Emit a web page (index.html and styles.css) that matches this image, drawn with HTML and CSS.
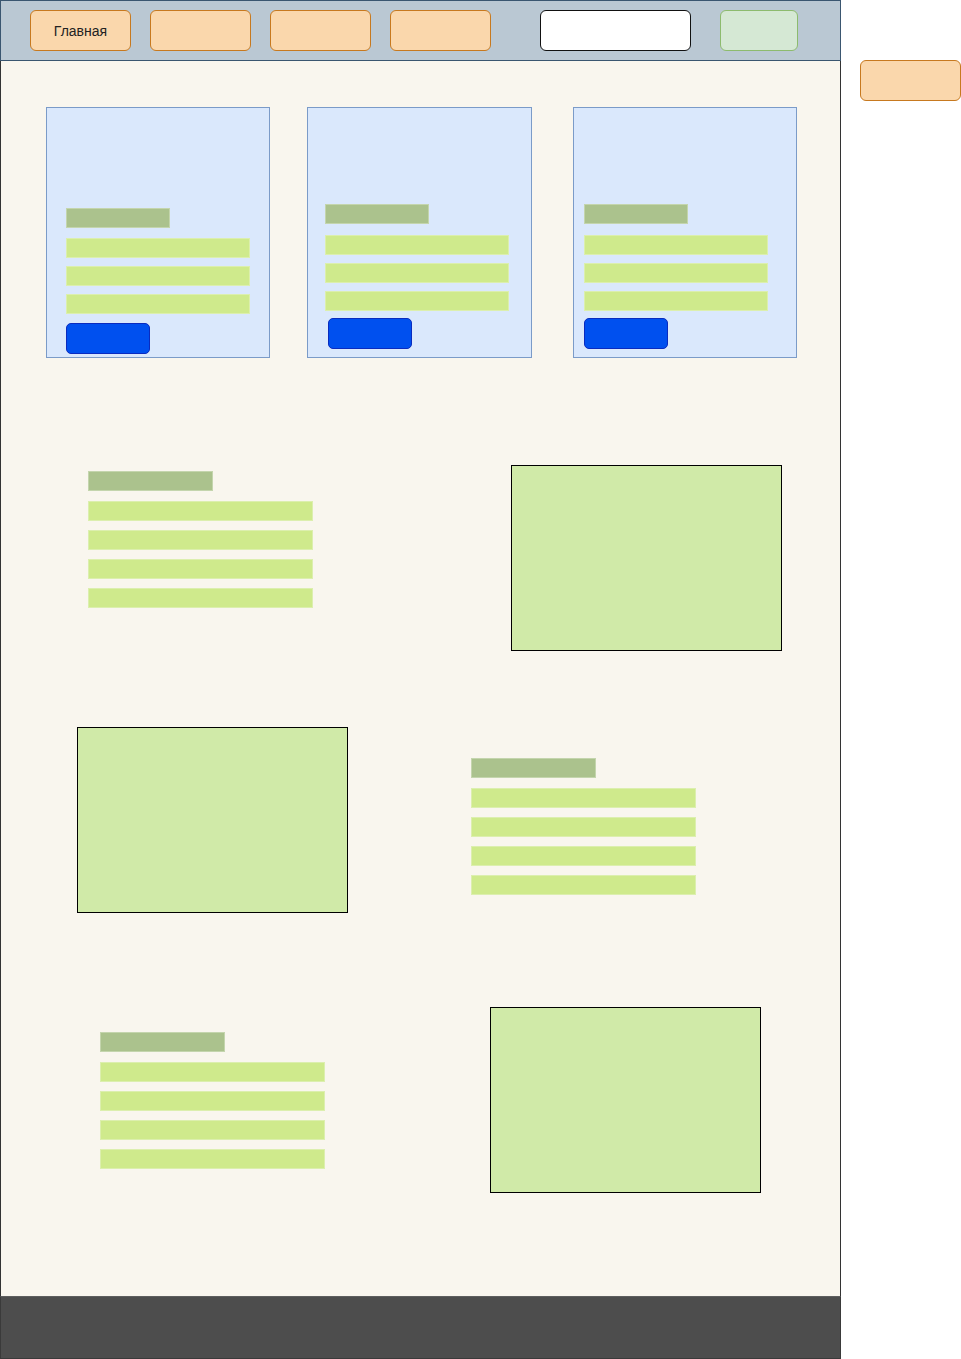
FILE: index.html
```html
<!DOCTYPE html>
<html lang="ru">
<head>
  <meta charset="UTF-8">
  <title>Главная</title>
  <link rel="stylesheet" href="styles.css">
</head>
<body>
  <div class="layout">
    <div class="page">
      <header class="topbar">
        <nav class="menu">
          <a class="menu-btn">Главная</a>
          <a class="menu-btn"></a>
          <a class="menu-btn"></a>
          <a class="menu-btn"></a>
        </nav>
        <div class="search"></div>
        <div class="login"></div>
      </header>

      <main class="content">
        <div class="cards">
          <div class="card">
            <div class="title-bar"></div>
            <div class="line"></div>
            <div class="line"></div>
            <div class="line"></div>
            <button class="card-btn"></button>
          </div>
          <div class="card card-b">
            <div class="title-bar"></div>
            <div class="line"></div>
            <div class="line"></div>
            <div class="line"></div>
            <button class="card-btn"></button>
          </div>
          <div class="card card-c">
            <div class="title-bar"></div>
            <div class="line"></div>
            <div class="line"></div>
            <div class="line"></div>
            <button class="card-btn"></button>
          </div>
        </div>

        <section class="feature feature-one">
          <div class="text-block">
            <div class="title-bar"></div>
            <div class="line"></div>
            <div class="line"></div>
            <div class="line"></div>
            <div class="line"></div>
          </div>
          <div class="picture"></div>
        </section>

        <section class="feature feature-two">
          <div class="picture"></div>
          <div class="text-block">
            <div class="title-bar"></div>
            <div class="line"></div>
            <div class="line"></div>
            <div class="line"></div>
            <div class="line"></div>
          </div>
        </section>

        <section class="feature feature-three">
          <div class="text-block">
            <div class="title-bar"></div>
            <div class="line"></div>
            <div class="line"></div>
            <div class="line"></div>
            <div class="line"></div>
          </div>
          <div class="picture"></div>
        </section>
      </main>

      <footer class="footer"></footer>
    </div>

    <aside class="side">
      <a class="menu-btn"></a>
    </aside>
  </div>
</body>
</html>
```

FILE: styles.css
```css
body {
  margin: 0;
  padding: 0;
  font-family: 'Liberation Sans', Arial, sans-serif;
  background-color: #fff;
}
.layout {
  display: flex;
  align-items: flex-start;
}
.page {
  width: 841px;
  flex-shrink: 0;
}

/* header */
.topbar {
  height: 61px;
  box-sizing: border-box;
  border: 1px solid #3a5670;
  background-color: #bac8d3;
  display: flex;
  align-items: center;
  padding-left: 29px;
}
.menu {
  display: flex;
  gap: 19px;
}
.menu-btn {
  display: flex;
  align-items: center;
  justify-content: center;
  width: 101px;
  height: 41px;
  box-sizing: border-box;
  background-color: #fad7ac;
  border: 1px solid #c7791f;
  border-radius: 6px;
  font-size: 14px;
  color: #222;
}
.search {
  width: 151px;
  height: 41px;
  box-sizing: border-box;
  margin-left: 49px;
  background-color: #fff;
  border: 1px solid #111;
  border-radius: 6px;
}
.login {
  width: 78px;
  height: 41px;
  box-sizing: border-box;
  margin-left: 29px;
  background-color: #d5e8d4;
  border: 1px solid #8dbb6e;
  border-radius: 6px;
}

/* main area */
.content {
  height: 1235px;
  box-sizing: border-box;
  border-left: 1px solid #333;
  border-right: 1px solid #333;
  background-color: #f9f6ee;
  padding-top: 46px;
}
.cards {
  display: flex;
  gap: 37px;
  padding-left: 45px;
}
.card {
  width: 224px;
  height: 251px;
  box-sizing: border-box;
  background-color: #dae8fc;
  border: 1px solid #7b9bc8;
  display: flex;
  flex-direction: column;
  justify-content: flex-end;
  align-items: flex-start;
  padding: 0 19px 3px;
}
.card .title-bar {
  width: 104px;
  margin-bottom: 10px;
}
.card .line {
  width: 184px;
  margin-bottom: 8px;
}
.card .line:last-of-type {
  margin-bottom: 9px;
}
.card-btn {
  width: 84px;
  height: 31px;
  padding: 0;
  background-color: #0050ef;
  border: 1px solid #0a2bbf;
  border-radius: 5px;
}
/* the second and third cards sit a little differently */
.card-b {
  width: 225px;
  padding: 0 17px 8px;
}
.card-c {
  margin-left: 4px;
  padding: 0 10px 8px;
}
.card-b .title-bar,
.card-c .title-bar {
  margin-bottom: 11px;
}
.card-b .line:last-of-type,
.card-c .line:last-of-type {
  margin-bottom: 7px;
}
.card-b .card-btn {
  margin-left: 3px;
}

.title-bar {
  height: 20px;
  box-sizing: border-box;
  background-color: #abc28d;
  border: 1px solid #c4d5ad;
}
.line {
  height: 20px;
  box-sizing: border-box;
  background-color: #cfea8c;
  border: 1px solid #dcefae;
}

/* feature rows */
.feature {
  display: flex;
  align-items: flex-start;
}
.text-block {
  display: flex;
  flex-direction: column;
  gap: 9px;
}
.text-block .title-bar {
  width: 125px;
  margin-bottom: 1px;
}
.text-block .line {
  width: 225px;
}
.picture {
  width: 271px;
  height: 186px;
  box-sizing: border-box;
  background-color: #d0eaa8;
  border: 1px solid #000;
}
.feature-one {
  margin-top: 107px;
  padding: 0 58px 0 87px;
}
.feature-one .text-block {
  margin-top: 6px;
}
.feature-one .picture {
  margin-left: auto;
}
.feature-two {
  margin-top: 76px;
  padding-left: 76px;
}
.feature-two .text-block {
  margin-top: 31px;
  margin-left: 123px;
}
.feature-three {
  margin-top: 94px;
  padding: 0 79px 0 99px;
}
.feature-three .text-block {
  margin-top: 25px;
}
.feature-three .picture {
  margin-left: auto;
}

/* footer */
.footer {
  height: 63px;
  box-sizing: border-box;
  background-color: #4d4d4d;
  border: 1px solid #3a3a3a;
  border-top-color: #5e5e5e;
}

.side {
  margin-left: 19px;
  padding-top: 60px;
}
```
